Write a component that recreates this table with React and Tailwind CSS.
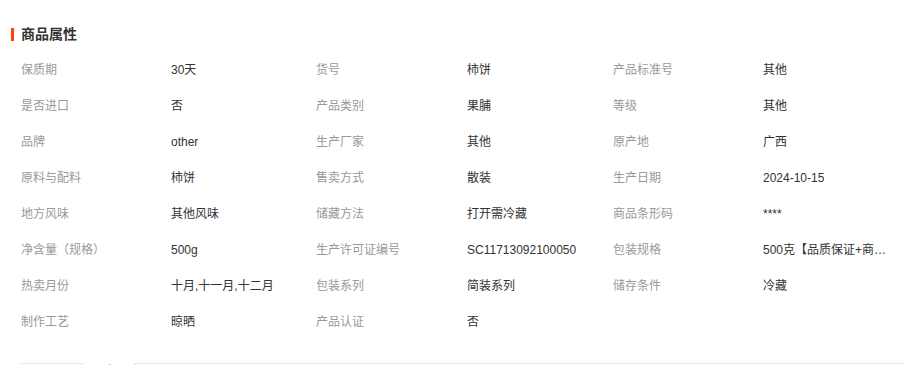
const rows = [
  ['保质期', '30天', '货号', '柿饼', '产品标准号', '其他'],
  ['是否进口', '否', '产品类别', '果脯', '等级', '其他'],
  ['品牌', 'other', '生产厂家', '其他', '原产地', '广西'],
  ['原料与配料', '柿饼', '售卖方式', '散装', '生产日期', '2024-10-15'],
  ['地方风味', '其他风味', '储藏方法', '打开需冷藏', '商品条形码', '****'],
  ['净含量（规格）', '500g', '生产许可证编号', 'SC11713092100050', '包装规格', '500克【品质保证+商品质量放心】'],
  ['热卖月份', '十月,十一月,十二月', '包装系列', '简装系列', '储存条件', '冷藏'],
  ['制作工艺', '晾晒', '产品认证', '否', '', ''],
];

export default function App() {
  return (
    <div className="h-[365px] overflow-hidden bg-white text-[12px] font-['Liberation_Sans','Noto_Sans_CJK_SC',sans-serif]">
      {/* 标题 */}
      <div className="flex items-center h-5 mt-6 pl-[11px]">
        <span className="w-[3px] h-[13px] bg-[#ff4400]" />
        <h2 className="ml-[7px] text-[14px] font-bold text-[#333]">商品属性</h2>
      </div>

      <div className="ml-[21px] mt-[8px] grid grid-cols-[150px_145px_151px_146px_150px_126px]">
        {rows.map((r, i) =>
          r.map((t, j) => (
            <div
              key={i + '-' + j}
              className={`h-9 flex items-center truncate ${j % 2 === 0 ? 'text-[#999]' : 'text-[#333]'}`}
            >
              <span className="truncate">{t}</span>
            </div>
          ))
        )}
      </div>

      {/* 底部标签 */}
      <div className="flex items-start mt-[23px] h-10">
        <div className="ml-[21px] w-[63px] h-10 border-t border-r border-[#e5e5e5]" />
        <div className="ml-[25px] mt-[1px] w-[2px] h-[2px] bg-[#ccc]" />
        <div className="ml-[23px] flex-1 h-10 border-t border-l border-[#e5e5e5]" />
      </div>
    </div>
  );
}
